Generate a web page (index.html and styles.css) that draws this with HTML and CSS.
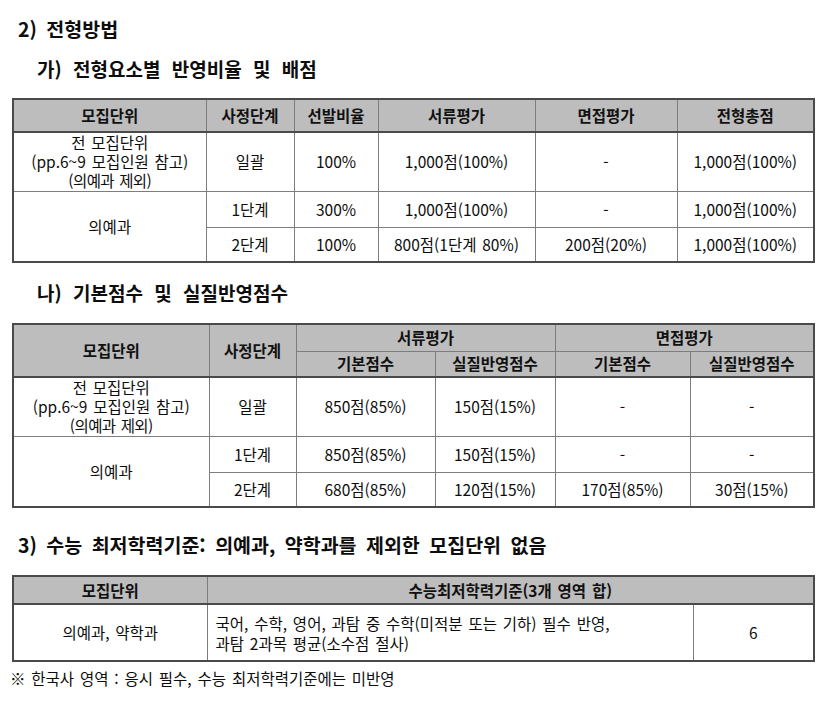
FILE: index.html
```html
<!DOCTYPE html>
<html lang="ko">
<head>
<meta charset="utf-8">
<link rel="stylesheet" href="styles.css">
</head>
<body>
<div class="page">
  <h2 class="h-main first">2) 전형방법</h2>
  <h3 class="h-sub">가) 전형요소별 반영비율 및 배점</h3>
  <table class="grid">
    <colgroup>
      <col style="width:193px"><col style="width:88px"><col style="width:84px"><col style="width:157px"><col style="width:142px"><col style="width:137px">
    </colgroup>
    <thead>
      <tr class="hr1"><th>모집단위</th><th>사정단계</th><th>선발비율</th><th>서류평가</th><th>면접평가</th><th>전형총점</th></tr>
    </thead>
    <tbody>
      <tr class="r-tall"><td class="multi">전 모집단위<br>(pp.6~9 모집인원 참고)<br><span class="narrow">(의예과 제외)</span></td><td>일괄</td><td>100%</td><td>1,000점(100%)</td><td>-</td><td>1,000점(100%)</td></tr>
      <tr class="r-a"><td rowspan="2">의예과</td><td>1단계</td><td>300%</td><td>1,000점(100%)</td><td>-</td><td>1,000점(100%)</td></tr>
      <tr class="r-b"><td>2단계</td><td>100%</td><td>800점(1단계 80%)</td><td>200점(20%)</td><td>1,000점(100%)</td></tr>
    </tbody>
  </table>

  <h3 class="h-sub second">나) 기본점수 및 실질반영점수</h3>
  <table class="grid">
    <colgroup>
      <col style="width:196px"><col style="width:87px"><col style="width:139px"><col style="width:120px"><col style="width:135px"><col style="width:124px">
    </colgroup>
    <thead>
      <tr class="hr2a"><th rowspan="2">모집단위</th><th rowspan="2">사정단계</th><th colspan="2">서류평가</th><th colspan="2">면접평가</th></tr>
      <tr class="hr2b"><th>기본점수</th><th>실질반영점수</th><th>기본점수</th><th>실질반영점수</th></tr>
    </thead>
    <tbody>
      <tr class="r-tall"><td class="multi">전 모집단위<br>(pp.6~9 모집인원 참고)<br><span class="narrow">(의예과 제외)</span></td><td>일괄</td><td>850점(85%)</td><td>150점(15%)</td><td>-</td><td>-</td></tr>
      <tr class="r-a"><td rowspan="2">의예과</td><td>1단계</td><td>850점(85%)</td><td>150점(15%)</td><td>-</td><td>-</td></tr>
      <tr class="r-b"><td>2단계</td><td>680점(85%)</td><td>120점(15%)</td><td>170점(85%)</td><td>30점(15%)</td></tr>
    </tbody>
  </table>

  <h2 class="h-main third">3) 수능 최저학력기준: 의예과, 약학과를 제외한 모집단위 없음</h2>
  <table class="grid">
    <colgroup>
      <col style="width:194px"><col style="width:486px"><col style="width:121px">
    </colgroup>
    <thead>
      <tr class="hr3"><th>모집단위</th><th colspan="2">수능최저학력기준(3개 영역 합)</th></tr>
    </thead>
    <tbody>
      <tr class="r-c"><td>의예과, 약학과</td><td class="left">국어, 수학, 영어, 과탐 중 수학(미적분 또는 기하) 필수 반영,<br>과탐 2과목 평균(소수점 절사)</td><td>6</td></tr>
    </tbody>
  </table>
  <p class="note">※ 한국사 영역 : 응시 필수, 수능 최저학력기준에는 미반영</p>
</div>
</body>
</html>
```

FILE: styles.css
```css
html, body {
  margin: 0;
  padding: 0;
  background: #ffffff;
}
body {
  font-family: "Noto Sans CJK KR", "Noto Sans", sans-serif;
  color: #0d0d0d;
}
.page {
  padding: 0 0 0 12px;
  width: 801px;
}
.h-main {
  margin: 0;
  font-size: 19.5px;
  line-height: 24px;
  font-weight: bold;
  word-spacing: 4px;
  margin-left: 6px;
}
.h-main.first { padding-top: 17px; }
.h-main.third { margin-top: 25px; margin-bottom: 18px; }
.h-sub {
  margin: 16px 0 17px 25px;
  font-size: 19px;
  line-height: 24px;
  font-weight: bold;
  word-spacing: 6px;
}
.h-sub.second { margin-top: 18px; margin-bottom: 18px; }
.grid {
  border-collapse: collapse;
  table-layout: fixed;
  width: 801px;
  border: 2px solid #4a4a4a;
  font-size: 15.5px;
  word-spacing: 1.5px;
}
.grid th, .grid td {
  border: 1px solid #7d7d7d;
  padding: 0 2px;
  text-align: center;
  vertical-align: middle;
  line-height: 19px;
  white-space: nowrap;
}
.grid th {
  background: #bdbdbd;
  font-weight: bold;
  color: #111111;
}
.grid thead tr:last-child th { border-bottom: 2px solid #4a4a4a; }
.grid thead tr.hr2a th[rowspan] { border-bottom: 2px solid #4a4a4a; }
.hr1 { height: 33px; }
.hr2a { height: 27px; }
.hr2b { height: 26px; }
.hr3 { height: 28px; }
.r-tall { height: 59px; }
.r-a { height: 36px; }
.r-b { height: 35px; }
.r-c { height: 57px; }
.multi { line-height: 19px; }
.narrow { letter-spacing: -0.6px; }
.grid td.left {
  text-align: left;
  padding-left: 8px;
  line-height: 20px;
}
.note {
  margin: 6px 0 0 -2px;
  font-size: 15.5px;
  line-height: 20px;
  word-spacing: 1.5px;
}
```
